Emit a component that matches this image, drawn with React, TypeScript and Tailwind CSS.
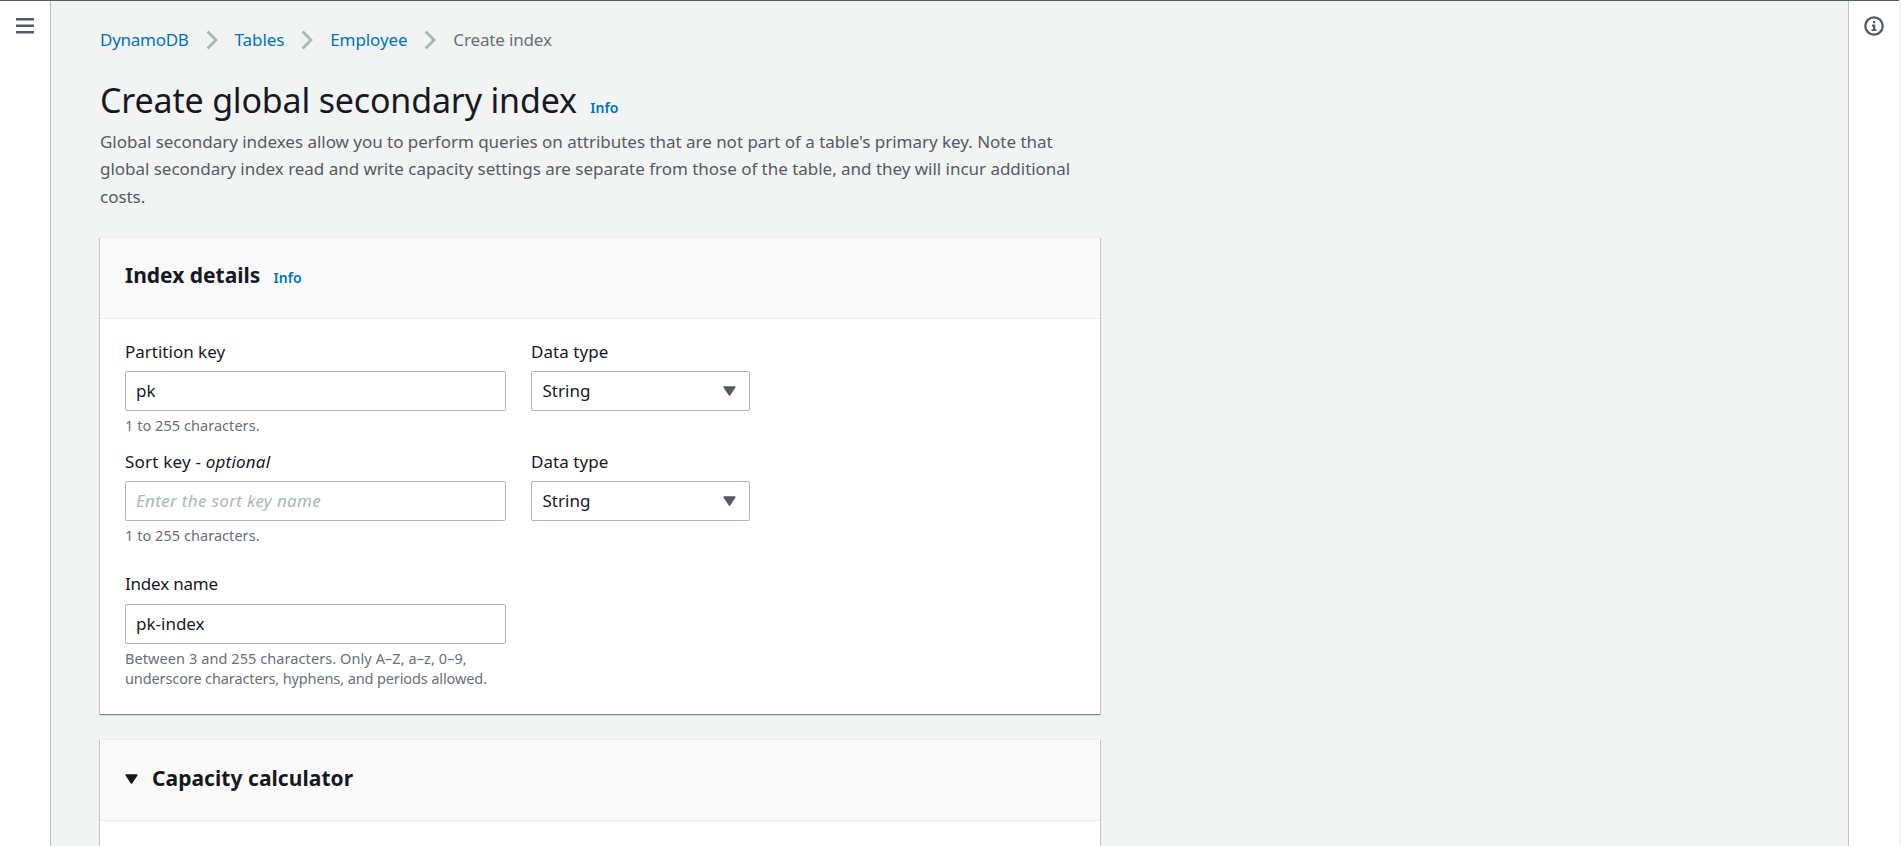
import type { ReactNode } from 'react'

const Triangle = ({ className }: { className: string }) => (
  <svg viewBox="0 0 13 10" className={`h-[10px] w-[13px] shrink-0 ${className}`}>
    <path d="M1.2 1H11.8L6.5 9Z" fill="currentColor" stroke="currentColor" strokeWidth="1.6" strokeLinejoin="round" />
  </svg>
)

const Chevron = () => (
  <svg viewBox="0 0 12 20" className="mx-[16.9px] mt-1 h-5 w-3 shrink-0" fill="none">
    <path d="M1.6 1.4L10 10L1.6 18.6" stroke="#aab7b8" strokeWidth="2.8" />
  </svg>
)

const InfoLink = ({ className = '' }: { className?: string }) => (
  <a href="#" className={`text-[14px] leading-none font-semibold tracking-[0.1px] text-[#0073bb] ${className}`}>Info</a>
)

const Label = ({ children, className = '' }: { children: ReactNode; className?: string }) => (
  <div className={`h-7 text-[17px] leading-7 ${className}`}>{children}</div>
)

const Hint = ({ children }: { children: ReactNode }) => (
  <div className="mt-1 text-[14.5px] leading-5 text-[#687078]">{children}</div>
)

const TextInput = ({ value, placeholder }: { value?: string; placeholder?: string }) => (
  <input
    defaultValue={value}
    placeholder={placeholder}
    className="mt-1.5 block h-10 w-[381px] rounded-[2px] border border-[#aab7b8] bg-white px-2.5 pb-0.5 text-[17px] outline-none placeholder:tracking-[0.33px] placeholder:text-[#aab7b8] placeholder:italic"
  />
)

const SelectBox = () => (
  <button className="mt-1.5 flex h-10 w-[219px] items-center justify-between rounded-[2px] border border-[#aab7b8] bg-white pr-[13.5px] pl-[10.5px] text-left text-[17px]">
    <span>String</span>
    <Triangle className="text-[#545b64]" />
  </button>
)

const KeyRow = ({ label, value, placeholder }: { label: ReactNode; value?: string; placeholder?: string }) => (
  <div className="flex gap-[25px]">
    <div>
      <Label className="pt-px">{label}</Label>
      <TextInput value={value} placeholder={placeholder} />
      <Hint>
        <span className="tracking-[0.05px]">1 to 255 characters.</span>
      </Hint>
    </div>
    <div>
      <Label className="pt-px">
        <span className="tracking-[0.05px]">Data type</span>
      </Label>
      <SelectBox />
    </div>
  </div>
)

const Panel = ({ header, children }: { header: ReactNode; children: ReactNode }) => (
  <section className="w-[1000px] border-t border-[#eaeded] bg-white shadow-[0_1px_1px_0_rgba(0,28,36,0.3),1px_1px_1px_0_rgba(0,28,36,0.15),-1px_1px_1px_0_rgba(0,28,36,0.15)]">
    <header className="flex h-[81px] items-start border-b border-[#eaeded] bg-[#fafafa] px-[25px] pt-[23px]">{header}</header>
    {children}
  </section>
)

export default function App() {
  return (
    <div className="flex h-[846px] w-full flex-col overflow-hidden bg-[#f2f3f3] font-['Noto_Sans','Liberation_Sans',sans-serif] text-[#16191f]">
      <div className="mr-0.5 h-px shrink-0 bg-[#545b64]" />
      <div className="flex min-h-0 flex-1">
        <aside className="w-[51px] shrink-0 border-r border-[#bbc3c6] bg-white">
          <svg viewBox="0 0 18 16" className="mt-[17px] ml-4 h-4 w-[18px]" fill="#545b64">
            <rect width="18" height="2.5" />
            <rect y="6.5" width="18" height="2.5" />
            <rect y="13" width="18" height="2.5" />
          </svg>
        </aside>

        <main className="min-w-0 flex-1 overflow-hidden pt-[25px] pl-[49px]">
          <nav className="flex items-start text-[17px] leading-7 text-[#0073bb]">
            <a href="#" className="tracking-[-0.27px]">DynamoDB</a>
            <Chevron />
            <a href="#" className="tracking-[-0.03px]">Tables</a>
            <Chevron />
            <a href="#" className="tracking-[-0.08px]">Employee</a>
            <Chevron />
            <span className="tracking-[-0.15px] text-[#687078]">Create index</span>
          </nav>

          <div className="mt-6 flex h-[45px] items-baseline leading-[45px]">
            <h1 className="text-[34px] tracking-[-0.18px]">Create global secondary index</h1>
            <InfoLink className="ml-[13.5px]" />
          </div>
          <p className="mt-[4.5px] text-[17px] leading-[27.5px] tracking-[-0.025px] text-[#545b64]">
            Global secondary indexes allow you to perform queries on attributes that are not part of a table's primary key. Note that
            <br />
            global secondary index read and write capacity settings are separate from those of the table, and they will incur additional
            <br />
            costs.
          </p>

          <div className="mt-[27px] flex flex-col gap-[25px]">
            <Panel
              header={
                <div className="flex items-baseline leading-7">
                  <h2 className="text-[21px] font-bold">Index details</h2>
                  <InfoLink className="ml-[13px]" />
                </div>
              }
            >
              <div className="px-[25px] pt-[18px] pb-[26px]">
                <div className="flex flex-col gap-3">
                  <KeyRow label="Partition key" value="pk" />
                  <KeyRow
                    label={<span className="tracking-[0.2px]">Sort key - <em>optional</em></span>}
                    placeholder="Enter the sort key name"
                  />
                </div>
                <div className="mt-[25px]">
                  <Label>
                    <span className="tracking-[-0.2px]">Index name</span>
                  </Label>
                  <TextInput value="pk-index" />
                  <Hint>
                    <span className="tracking-[0.08px]">Between 3 and 255 characters. Only A–Z, a–z, 0–9,</span>
                    <br />
                    <span className="tracking-[-0.11px]">underscore characters, hyphens, and periods allowed.</span>
                  </Hint>
                </div>
              </div>
            </Panel>

            <Panel
              header={
                <div className="flex items-center pt-px leading-7">
                  <Triangle className="mt-0.5 mr-3.5" />
                  <h2 className="text-[21px] font-bold tracking-[0.05px]">Capacity calculator</h2>
                </div>
              }
            >
              <div className="h-40" />
            </Panel>
          </div>
        </main>

        <aside className="mr-0.5 w-[51px] shrink-0 border-l border-[#bbc3c6] bg-white">
          <svg viewBox="0 0 20 20" className="mt-[15px] ml-[15px] size-5" fill="none">
            <circle cx="10" cy="10" r="8.7" stroke="#545b64" strokeWidth="2.3" />
            <path d="M9 5h2.2v2.3H9zM8 8.6h3.2v4.6h1.3V15H7.5v-1.8H9v-2.8H8z" fill="#545b64" />
          </svg>
        </aside>
      </div>
    </div>
  )
}
